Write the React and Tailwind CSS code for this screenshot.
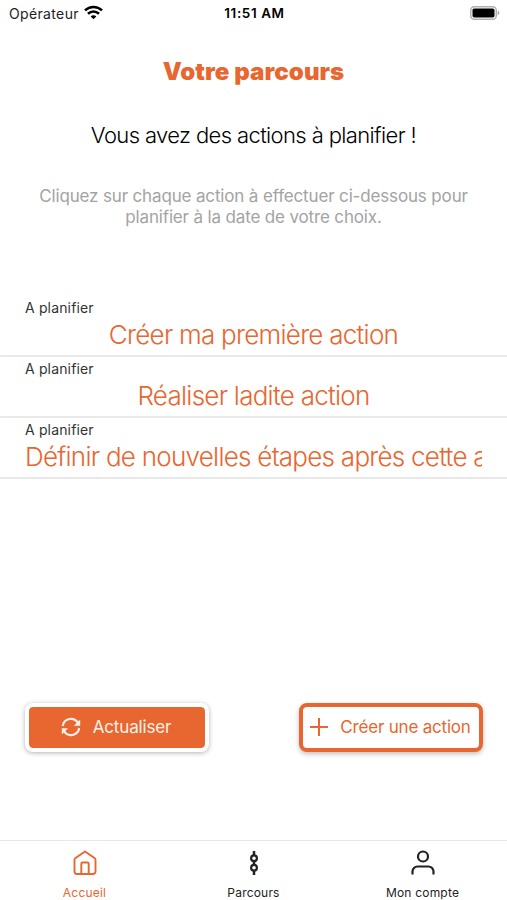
const ORANGE_TEXT = 'text-[#e8662f]';

const actions = [
    { id: 1, title: 'Créer ma première action' },
    { id: 2, title: 'Réaliser ladite action' },
    { id: 3, title: 'Définir de nouvelles étapes après cette action' },
];

function StatusBar() {
    return (
        <header className="h-7 shrink-0 grid grid-cols-3 items-center pb-[2px] pl-[9px] pr-[7px] text-[14px] text-[#222]">
            <div className="flex items-center gap-[5px]">
                <span className="tracking-[0.35px]">Opérateur</span>
                <svg className="-mt-px" width="19" height="15" viewBox="0 0 19 15" fill="none" stroke="#000" strokeWidth="2.6">
                    <path d="M1 5.4C5.8.8 13.2.8 18 5.4" />
                    <path d="M4 8.7c3.2-3 7.8-3 11 0" />
                    <path d="M9.5 14.2 6.7 11.4c1.6-1.5 4-1.5 5.6 0z" fill="#000" stroke="none" />
                </svg>
            </div>
            <span className="text-center text-[13.5px] font-semibold tracking-[0.6px] text-black">11:51 AM</span>
            <svg className="justify-self-end" width="30" height="14" viewBox="0 0 30 14">
                <rect x=".75" y=".75" width="25.5" height="12.5" rx="3.5" fill="#fff" stroke="#b0b0b0" strokeWidth="1.5" />
                <rect x="2.5" y="2.5" width="22" height="9" rx="1.8" fill="#000" />
                <path d="M27.6 4.6c2.4.8 2.4 4 0 4.8z" fill="#aaa" />
            </svg>
        </header>
    );
}

function ActionRow({ title }) {
    return (
        <li className="h-[61px] border-b-2 border-[#e9e9e9] px-[25px] pt-[3px]">
            <p className="text-[14px] leading-[18px] tracking-[0.15px] text-[#333]">A planifier</p>
            <p className={`${ORANGE_TEXT} flex justify-center-safe overflow-hidden whitespace-nowrap pt-[1px] text-[26px] leading-[34px] font-light tracking-[-0.74px]`}>
                {title}
            </p>
        </li>
    );
}

function RefreshIcon() {
    return (
        <svg className="-mt-0.5" width="20" height="20" viewBox="0 0 20 20" fill="none" stroke="currentColor" strokeWidth="2.1">
            <path d="M1.8 9A8.2 8.2 0 0 1 17 6M18.2 11A8.2 8.2 0 0 1 3 14" />
            <path d="M19.2 2.5v6.3h-6.3zM.8 17.5v-6.3h6.3z" fill="currentColor" stroke="none" />
        </svg>
    );
}

function HomeIcon() {
    return (
        <svg width="26" height="26" viewBox="0 0 26 26" fill="none" stroke="currentColor" strokeWidth="1.9" strokeLinejoin="round">
            <path d="M2.5 9.8c0-.8.3-1.3 1-1.8L13 1.5 22.5 8c.7.5 1 1 1 1.8V21.5a2.5 2.5 0 0 1-2.5 2.5H5a2.5 2.5 0 0 1-2.5-2.5z" />
            <path d="M9.3 24V13.8c0-.8.4-1.3 1.2-1.3h5c.8 0 1.2.5 1.2 1.3V24" />
        </svg>
    );
}

function PathIcon() {
    return (
        <svg width="26" height="26" viewBox="0 0 26 26" fill="none" stroke="currentColor" strokeWidth="2.2">
            <path d="M13 1v4.5M13 10.8v4.4M13 20.5v4.5" strokeWidth="2.5" />
            <circle cx="13" cy="8.2" r="2.9" />
            <circle cx="13" cy="17.8" r="2.9" />
        </svg>
    );
}

function UserIcon() {
    return (
        <svg width="26" height="26" viewBox="0 0 26 26" fill="none" stroke="currentColor" strokeWidth="2.2">
            <circle cx="13" cy="6.5" r="5" />
            <path d="M2.5 24.5v-3a5 5 0 0 1 5-5h11a5 5 0 0 1 5 5v3" />
        </svg>
    );
}

function TabItem({ icon, label, active }) {
    return (
        <a className={`flex flex-col items-center pt-[9px] ${active ? ORANGE_TEXT : 'text-[#222]'}`}>
            {icon}
            <span className="mt-[9px] text-[12px] leading-4 tracking-[0.2px]">{label}</span>
        </a>
    );
}

export default function App() {
    return (
        <div className="flex h-screen flex-col overflow-hidden bg-white font-['Inter','Liberation_Sans',sans-serif]">
            <StatusBar />

            <main className="flex flex-1 flex-col">
                <section className="text-center">
                    <h1 className={`${ORANGE_TEXT} mt-[28px] text-[24px] leading-8 font-black tracking-[0.1px]`}>Votre parcours</h1>
                    <h2 className="mt-[31px] text-[22px] leading-8 font-light tracking-[-0.62px] text-black">Vous avez des actions à planifier !</h2>
                    <p className="mx-auto mt-[35px] w-[450px] text-[17px] leading-[21px] tracking-[-0.15px] text-[#a3a3a3]">
                        Cliquez sur chaque action à effectuer ci-dessous pour planifier à la date de votre choix.
                    </p>
                </section>

                <ul className="mt-[68px]">
                    {actions.map((action) => (
                        <ActionRow key={action.id} title={action.title} />
                    ))}
                </ul>

                <div className="mt-auto mb-[88px] flex justify-between pr-6 pl-[25px]">
                    <button className="flex h-[49px] w-[184px] items-center justify-center gap-3 rounded-lg border-4 border-white bg-[#e8662f] bg-clip-padding pr-0.5 text-[17px] tracking-[-0.15px] text-[#fff1ea] shadow-[0_1px_5px_rgba(0,0,0,0.3)]">
                        <RefreshIcon />
                        Actualiser
                    </button>
                    <button className={`${ORANGE_TEXT} flex h-[49px] w-[184px] items-center justify-center gap-3 rounded-lg border-4 border-[#e8662f] bg-white pr-px text-[17px] tracking-[-0.2px] whitespace-nowrap shadow-[0_2px_5px_rgba(0,0,0,0.25)]`}>
                        <svg className="-mt-0.5" width="18" height="18" viewBox="0 0 18 18" stroke="currentColor" strokeWidth="2">
                            <path d="M9 0v18M0 9h18" />
                        </svg>
                        Créer une action
                    </button>
                </div>
            </main>

            <nav className="grid h-[60px] shrink-0 grid-cols-3 border-t border-[#e8e8e8]">
                <TabItem icon={<HomeIcon />} label="Accueil" active />
                <TabItem icon={<PathIcon />} label="Parcours" />
                <TabItem icon={<UserIcon />} label="Mon compte" />
            </nav>
        </div>
    );
}
